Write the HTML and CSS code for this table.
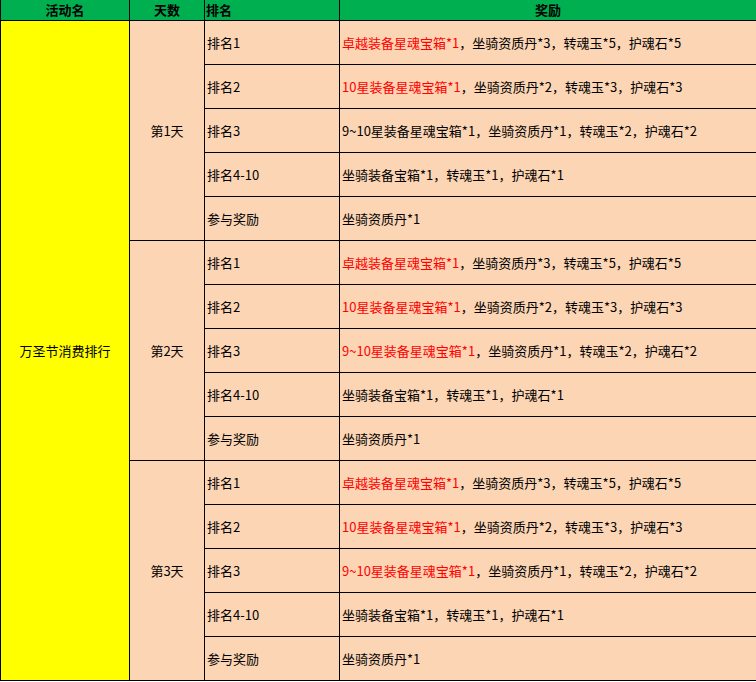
FILE: index.html
```html
<!DOCTYPE html>
<html>
<head>
<meta charset="utf-8">
<link rel="stylesheet" href="styles.css">
</head>
<body>
<table class="tbl">
  <colgroup>
    <col class="c1"><col class="c2"><col class="c3"><col class="c4">
  </colgroup>
  <thead>
    <tr class="head">
      <th class="center">活动名</th>
      <th class="center">天数</th>
      <th class="left">排名</th>
      <th class="center">奖励</th>
    </tr>
  </thead>
  <tbody>
    <tr>
      <td class="event" rowspan="15">万圣节消费排行</td>
      <td class="day" rowspan="5">第1天</td>
      <td>排名1</td>
      <td><span class="red">卓越装备星魂宝箱*1</span>，坐骑资质丹*3，转魂玉*5，护魂石*5</td>
    </tr>
    <tr><td>排名2</td><td><span class="red">10星装备星魂宝箱*1</span>，坐骑资质丹*2，转魂玉*3，护魂石*3</td></tr>
    <tr><td>排名3</td><td>9~10星装备星魂宝箱*1，坐骑资质丹*1，转魂玉*2，护魂石*2</td></tr>
    <tr><td>排名4-10</td><td>坐骑装备宝箱*1，转魂玉*1，护魂石*1</td></tr>
    <tr><td>参与奖励</td><td>坐骑资质丹*1</td></tr>

    <tr>
      <td class="day" rowspan="5">第2天</td>
      <td>排名1</td>
      <td><span class="red">卓越装备星魂宝箱*1</span>，坐骑资质丹*3，转魂玉*5，护魂石*5</td>
    </tr>
    <tr><td>排名2</td><td><span class="red">10星装备星魂宝箱*1</span>，坐骑资质丹*2，转魂玉*3，护魂石*3</td></tr>
    <tr><td>排名3</td><td><span class="red">9~10星装备星魂宝箱*1</span>，坐骑资质丹*1，转魂玉*2，护魂石*2</td></tr>
    <tr><td>排名4-10</td><td>坐骑装备宝箱*1，转魂玉*1，护魂石*1</td></tr>
    <tr><td>参与奖励</td><td>坐骑资质丹*1</td></tr>

    <tr>
      <td class="day" rowspan="5">第3天</td>
      <td>排名1</td>
      <td><span class="red">卓越装备星魂宝箱*1</span>，坐骑资质丹*3，转魂玉*5，护魂石*5</td>
    </tr>
    <tr><td>排名2</td><td><span class="red">10星装备星魂宝箱*1</span>，坐骑资质丹*2，转魂玉*3，护魂石*3</td></tr>
    <tr><td>排名3</td><td><span class="red">9~10星装备星魂宝箱*1</span>，坐骑资质丹*1，转魂玉*2，护魂石*2</td></tr>
    <tr><td>排名4-10</td><td>坐骑装备宝箱*1，转魂玉*1，护魂石*1</td></tr>
    <tr><td>参与奖励</td><td>坐骑资质丹*1</td></tr>
  </tbody>
</table>
</body>
</html>
```
FILE: styles.css
```css
html, body {
  margin: 0;
  padding: 0;
  background: #ffffff;
}
.tbl {
  border-collapse: collapse;
  table-layout: fixed;
  width: 756px;
  font-family: "Noto Sans CJK SC", "Microsoft YaHei", sans-serif;
  font-size: 13px;
  color: #000;
}
.c1 { width: 129px; }
.c2 { width: 75px; }
.c3 { width: 135px; }
.c4 { width: 417px; }
.tbl th, .tbl td {
  border: 1px solid #000;
  padding: 0 2px;
  white-space: nowrap;
  vertical-align: middle;
  line-height: 16px;
}
.head th {
  background: #00b050;
  height: 20px;
  font-weight: bold;
  border-top: none;
}
.head .center { text-align: center; }
.head .left { text-align: left; padding-left: 1px; }
.tbl td {
  background: #fcd5b4;
  height: 43px;
  text-align: left;
}
.tbl td.event {
  background: #ffff00;
  text-align: center;
}
.tbl td.day {
  text-align: center;
}
.red { color: #ff0000; }
```
